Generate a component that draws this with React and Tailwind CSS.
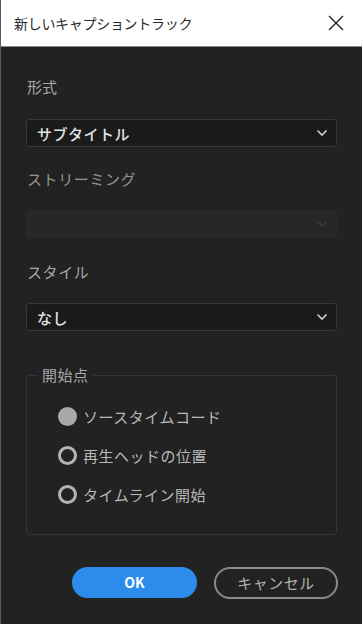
import React from 'react';

const jp = { fontFamily: '"Noto Sans CJK JP", "Noto Sans", sans-serif' };

const Chevron = ({ dim }) => (
  <svg width="12" height="8" viewBox="0 0 12 8" fill="none">
    <path d="M1.5 1.5 L6 6 L10.5 1.5" stroke={dim ? '#3a3a3a' : '#d0d0d0'} strokeWidth="1.6" />
  </svg>
);

const Select = ({ value, disabled }) => (
  <div
    className={
      'mx-[25px] h-[28px] rounded-[3px] border flex items-center justify-between pl-[10px] pr-[8px] ' +
      (disabled ? 'bg-[#272727] border-[#2a2a2a]' : 'bg-[#1a1a1a] border-[#383838]')
    }
  >
    <span className="text-[15px] font-medium tracking-[0.5px] text-[#e2e2e2] leading-none">{value}</span>
    <Chevron dim={disabled} />
  </div>
);

const Radio = ({ label, checked }) => (
  <div className="flex items-center gap-[6px] h-[20px]">
    {checked ? (
      <span className="w-[19px] h-[19px] rounded-full bg-[#a9a9a9]" />
    ) : (
      <span className="w-[19px] h-[19px] rounded-full border-[3px] border-[#b4b4b4]" />
    )}
    <span className="text-[15px] tracking-[0.5px] text-[#b8b8b8] leading-none">{label}</span>
  </div>
);

export default function App() {
  return (
    <div style={jp} className="w-[362px] h-[624px] bg-[#222222] border-l border-[#5a5a5a] flex flex-col overflow-hidden">
      <div className="h-[47px] bg-white border-b border-[#8a8a8a] flex items-center justify-between pl-[13px] pr-[17px] shrink-0">
        <span className="text-[14px] text-[#2b2b2b] tracking-[-0.3px]">新しいキャプショントラック</span>
        <svg width="18" height="18" viewBox="0 0 18 18" fill="none">
          <path d="M2 2 L16 16 M16 2 L2 16" stroke="#222" strokeWidth="1.4" />
        </svg>
      </div>

      <div className="pt-[31px] text-[15px] text-[#a8a8a8] pl-[26px] leading-[18px]">形式</div>
      <div className="mt-[23px]"><Select value="サブタイトル" /></div>

      <div className="mt-[23px] text-[15px] tracking-[0.6px] text-[#959595] pl-[26px] leading-[18px]">ストリーミング</div>
      <div className="mt-[22px]"><Select value="" disabled /></div>

      <div className="mt-[25px] text-[15px] tracking-[0.6px] text-[#a8a8a8] pl-[26px] leading-[18px]">スタイル</div>
      <div className="mt-[22px]"><Select value="なし" /></div>

      <fieldset className="mt-[37px] mx-[25px] h-[167px] border border-[#363636] rounded-[3px] p-0">
        <legend className="px-[4px] ml-[11px] text-[15px] tracking-[0.5px] text-[#a8a8a8] leading-[14px]">開始点</legend>
        <div className="flex flex-col gap-[19px] pl-[31px] pt-[24px]">
          <Radio label="ソースタイムコード" checked />
          <Radio label="再生ヘッドの位置" />
          <Radio label="タイムライン開始" />
        </div>
      </fieldset>

      <div className="mt-[32px] flex gap-[17px] pl-[71px]">
        <button className="w-[125px] h-[31px] rounded-full bg-[#2d8ceb] text-white text-[14px] font-bold">OK</button>
        <button className="w-[124px] h-[32px] rounded-full border-2 border-[#8a8a8a] text-[#b0b0b0] text-[15px] tracking-[0.5px]">キャンセル</button>
      </div>
    </div>
  );
}
